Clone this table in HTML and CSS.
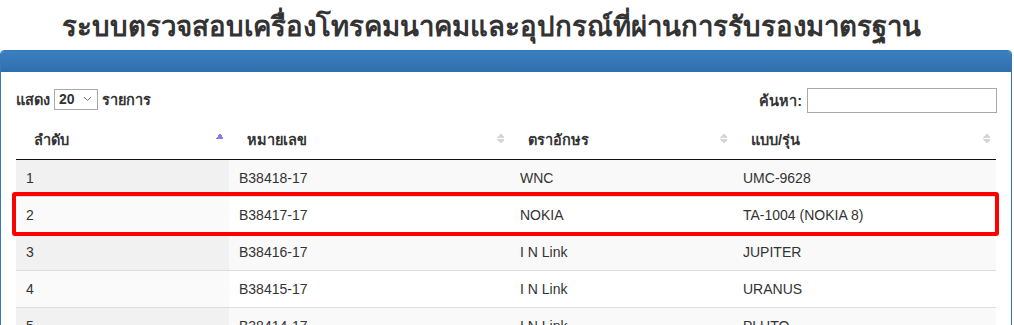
FILE: index.html
```html
<!DOCTYPE html>
<html lang="th">
<head>
<meta charset="UTF-8">
<meta name="viewport" content="width=device-width, initial-scale=1.0">
<title>ระบบตรวจสอบเครื่องโทรคมนาคม</title>
<link rel="stylesheet" href="styles.css">
</head>
<body>
  <h1 class="page-title">ระบบตรวจสอบเครื่องโทรคมนาคมและอุปกรณ์ที่ผ่านการรับรองมาตรฐาน</h1>

  <div class="panel">
    <div class="panel-heading"></div>
    <div class="panel-body">
      <div class="dt-top">
        <label class="dt-length">
          แสดง
          <span class="select-box">20
            <svg class="chevron" width="9" height="6" viewBox="0 0 9 6"><path d="M1 1l3.5 3.5L8 1" fill="none" stroke="#777" stroke-width="1"/></svg>
          </span>
          รายการ
        </label>
        <label class="dt-filter">
          ค้นหา:
          <input type="search" class="search-input">
        </label>
      </div>

      <div class="table-wrap">
        <table class="data-table">
          <colgroup>
            <col style="width: 213px">
            <col style="width: 281px">
            <col style="width: 223px">
            <col style="width: 263px">
          </colgroup>
          <thead>
            <tr>
              <th class="sort-asc">ลำดับ</th>
              <th class="sortable">หมายเลข</th>
              <th class="sortable">ตราอักษร</th>
              <th class="sortable">แบบ/รุ่น</th>
            </tr>
          </thead>
          <tbody>
            <tr class="odd">
              <td class="sorting-1">1</td>
              <td>B38418-17</td>
              <td>WNC</td>
              <td>UMC-9628</td>
            </tr>
            <tr class="even">
              <td class="sorting-1">2</td>
              <td>B38417-17</td>
              <td>NOKIA</td>
              <td>TA-1004 (NOKIA 8)</td>
            </tr>
            <tr class="odd">
              <td class="sorting-1">3</td>
              <td>B38416-17</td>
              <td>I N Link</td>
              <td>JUPITER</td>
            </tr>
            <tr class="even">
              <td class="sorting-1">4</td>
              <td>B38415-17</td>
              <td>I N Link</td>
              <td>URANUS</td>
            </tr>
            <tr class="odd">
              <td class="sorting-1">5</td>
              <td>B38414-17</td>
              <td>I N Link</td>
              <td>PLUTO</td>
            </tr>
          </tbody>
        </table>
        <!-- marks the selected record -->
        <div class="row-highlight"></div>
      </div>
    </div>
  </div>
</body>
</html>
```

FILE: styles.css
```css
* {
  margin: 0;
  padding: 0;
  box-sizing: border-box;
}

body {
  font-family: Tahoma, "Liberation Sans", "Noto Sans", "DejaVu Sans", sans-serif;
  font-size: 14px;
  color: #333;
  background-color: #fff;
  overflow: hidden;
}

.page-title {
  height: 50px;
  padding: 10px 0 0 62px;
  font-size: 27.6px;
  font-weight: bold;
  line-height: 34px;
  color: #333;
  white-space: nowrap;
}

/* Panel */
.panel {
  width: 1012px;
  border: 1px solid #337ab7;
  border-radius: 4px 4px 0 0;
}

.panel-heading {
  height: 21px;
  background: linear-gradient(#3a80c1, #2f6ead);
  border-radius: 3px 3px 0 0;
}

.panel-body {
  padding: 15px 14px 0 15px;
}

/* Length + search controls */
.dt-top {
  display: flex;
  justify-content: space-between;
  align-items: center;
  height: 26px;
  margin-bottom: 6px;
}

.dt-length,
.dt-filter {
  display: flex;
  align-items: center;
  gap: 4px;
  font-size: 14.5px;
  font-weight: bold;
}

.dt-length {
  margin-top: -2px;
}

.select-box {
  display: inline-flex;
  align-items: center;
  justify-content: space-between;
  width: 44px;
  height: 21px;
  padding: 0 5px 0 4px;
  border: 1px solid #a9a9a9;
  font-family: "Liberation Sans", Arial, sans-serif;
  font-size: 14px;
  font-weight: bold;
}

.chevron {
  display: block;
}

.search-input {
  width: 190px;
  height: 25px;
  margin-left: 1px;
  border: 1px solid #a9a9a9;
  outline: none;
}

/* Table */
.table-wrap {
  position: relative;
}

.data-table {
  width: 980px;
  border-collapse: collapse;
  table-layout: fixed;
}

.data-table th {
  position: relative;
  height: 40px;
  padding: 2px 18px 0;
  text-align: left;
  font-size: 14.5px;
  font-weight: bold;
  border-bottom: 1px solid #111;
}

.data-table th.sort-asc::after,
.data-table th.sortable::after {
  content: '';
  position: absolute;
  right: 6px;
  top: 13px;
  width: 7px;
  height: 12px;
}

.data-table th.sort-asc::after {
  background: linear-gradient(to bottom right, transparent 50%, #7f7fe6 50%) left 1px / 4px 6px no-repeat,
              linear-gradient(to bottom left, transparent 50%, #7f7fe6 50%) 3.5px 1px / 4px 6px no-repeat;
}

.data-table th.sortable::after {
  background: linear-gradient(to bottom right, transparent 50%, #d6d6d6 50%) left 1px / 4px 5px no-repeat,
              linear-gradient(to bottom left, transparent 50%, #d6d6d6 50%) 3.5px 1px / 4px 5px no-repeat,
              linear-gradient(to top right, transparent 50%, #d6d6d6 50%) left 7px / 4px 5px no-repeat,
              linear-gradient(to top left, transparent 50%, #d6d6d6 50%) 3.5px 7px / 4px 5px no-repeat;
}

.data-table td {
  height: 37px;
  padding: 0 10px;
  font-family: "Liberation Sans", Arial, sans-serif;
  font-size: 14px;
  color: #333;
  border-top: 1px solid #ddd;
}

.data-table tbody tr:first-child td {
  border-top: none;
}

.data-table tr.odd td {
  background-color: #f9f9f9;
}

.data-table tr.odd td.sorting-1 {
  background-color: #f1f1f1;
}

.data-table tr.even td.sorting-1 {
  background-color: #fafafa;
}

.row-highlight {
  position: absolute;
  top: 73px;
  left: -4px;
  width: 987px;
  height: 44px;
  border: 4px solid #f00;
  border-radius: 3px;
  pointer-events: none;
}
```
